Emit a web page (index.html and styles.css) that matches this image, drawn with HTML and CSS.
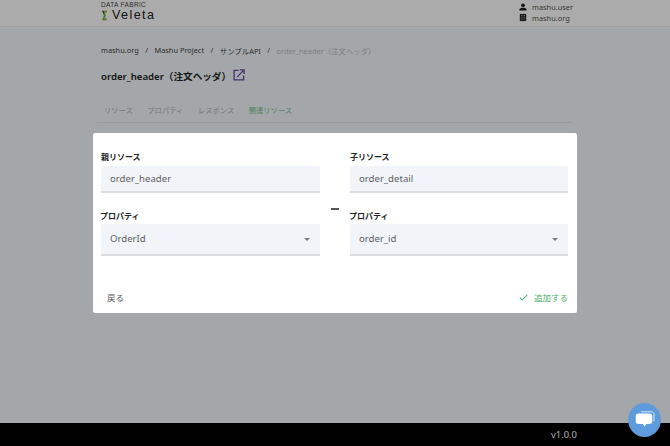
FILE: index.html
```html
<!DOCTYPE html>
<html lang="ja">
<head>
<meta charset="utf-8">
<title>Veleta</title>
<link rel="stylesheet" href="styles.css">
</head>
<body>
<div class="page">
  <header class="topbar">
    <div class="topbar-inner">
      <div class="brand">
        <span class="brand-sub">DATA FABRIC</span>
        <span class="brand-main">
          <svg class="brand-mark" width="7" height="11" viewBox="0 0 7 11"><path d="M1.2 0.8H6L5.6 2.4H3.6L5 5.2L3.4 8.6H6L5.6 10.3H1L2.8 5.4Z" fill="#73b336"/><path d="M1.2 0.8H2.4L3.2 3.4H2.2Z" fill="#3b3f2c"/></svg>
          <span class="brand-name">Veleta</span>
        </span>
      </div>
      <div class="account">
        <div class="account-row">
          <svg class="account-icon" width="8" height="8" viewBox="0 0 10 10"><circle cx="5" cy="2.8" r="2.3" fill="#1d1d1d"/><path d="M0.5 9.5V8C0.5 6.4 3.2 5.8 5 5.8S9.5 6.4 9.5 8V9.5Z" fill="#1d1d1d"/></svg>
          <span>mashu.user</span>
        </div>
        <div class="account-row">
          <svg class="account-icon" width="8" height="9" viewBox="0 0 10 10"><path d="M1 0.5H9V9.5H1Z" fill="#2b2b2b"/><path d="M2.6 2H4.2V3H2.6ZM5.8 2H7.4V3H5.8ZM2.6 4.2H4.2V5.2H2.6ZM5.8 4.2H7.4V5.2H5.8ZM2.6 6.4H4.2V7.4H2.6ZM5.8 6.4H7.4V7.4H5.8Z" fill="#8d8d8d"/></svg>
          <span>mashu.org</span>
        </div>
      </div>
    </div>
  </header>
  <main class="content">
    <nav class="crumbs">
      <span>mashu.org</span><span class="sep">/</span><span>Mashu Project</span><span class="sep">/</span><span>サンプルAPI</span><span class="sep">/</span><span class="crumb-current">order_header（注文ヘッダ）</span>
    </nav>
    <h1 class="title">
      <span>order_header（注文ヘッダ）</span>
      <svg class="title-link" width="12" height="12" viewBox="0 0 13 13" fill="none" stroke="#6b45a8" stroke-width="1.4"><path d="M6 1.5H1.2V11.8H11.5V7"/><path d="M4.5 8.5L11.5 1.5M7.5 1H12V5.5"/></svg>
    </h1>
    <div class="tabs">
      <span class="tab">リソース</span>
      <span class="tab">プロパティ</span>
      <span class="tab">レスポンス</span>
      <span class="tab tab-active">関連リソース</span>
    </div>
  </main>
  <footer class="footer"><span>v1.0.0</span></footer>
</div>
<div class="overlay">
  <section class="modal">
    <div class="fields">
      <div class="col">
        <label class="label">親リソース</label>
        <div class="input">order_header</div>
        <label class="label label-prop">プロパティ</label>
        <div class="input select">OrderId<span class="caret"></span></div>
      </div>
      <div class="link-mark"><span class="dash"></span></div>
      <div class="col">
        <label class="label">子リソース</label>
        <div class="input">order_detail</div>
        <label class="label label-prop">プロパティ</label>
        <div class="input select">order_id<span class="caret"></span></div>
      </div>
    </div>
    <div class="actions">
      <span class="back">戻る</span>
      <span class="add">
        <svg width="9" height="7" viewBox="0 0 10 8" fill="none" stroke="#4caf6a" stroke-width="1.2"><path d="M0.8 4.2L3.4 6.9L9.2 0.9"/></svg>
        <span>追加する</span>
      </span>
    </div>
  </section>
</div>
<button class="chat" type="button" aria-label="chat">
  <svg width="20" height="18" viewBox="0 0 20 18"><path d="M6 0.8H16.5C18 0.8 19 1.8 19 3.3V10.5" fill="none" stroke="#fff" stroke-width="1" opacity=".75"/><path d="M3.5 2.5H14.5C16.2 2.5 17.3 3.6 17.3 5.2V10.3C17.3 12 16.2 13 14.5 13H11.5L9.3 15.6L8 13H3.5C1.8 13 .7 12 .7 10.3V5.2C.7 3.6 1.8 2.5 3.5 2.5Z" fill="#fff"/></svg>
</button>
</body>
</html>
```
FILE: styles.css
```css
* { box-sizing: border-box; }
html, body { margin: 0; height: 100%; }
body {
  font-family: "Noto Sans", "Noto Sans CJK JP", sans-serif;
  overflow: hidden;
  background: #fff;
}
.page {
  height: 446px;
  display: flex;
  flex-direction: column;
  background: #f3f9fc;
  color: #333;
}
.topbar {
  height: 27px;
  background: #fff;
  border-bottom: 1px solid #eee;
}
.topbar-inner {
  width: 472px;
  margin-left: 101px;
  display: flex;
  justify-content: space-between;
}
.brand { display: flex; flex-direction: column; padding-top: 1px; font-family: "Liberation Sans", sans-serif; }
.brand-sub { font-size: 6.5px; line-height: 7px; color: #444; letter-spacing: .35px; }
.brand-main { display: flex; align-items: center; gap: 4px; height: 14px; margin-top: 0; }
.brand-mark { display: block; }
.brand-name { font-size: 12.6px; line-height: 14px; color: #222; letter-spacing: 1.4px; }
.account { padding-top: 1px; width: 54px; }
.account-row {
  display: flex;
  align-items: center;
  gap: 5px;
  height: 11px;
  font-size: 7.4px;
  color: #555;
  white-space: nowrap;
}
.account-icon { display: block; flex: none; }
.content { flex: 1; padding: 17px 0 0 101px; }
.crumbs { display: flex; height: 12px; align-items: center; font-size: 7.4px; color: #444; white-space: nowrap; }
.sep { margin: 0 6.5px; }
.crumb-current { color: #c0c0c0; }
.title {
  margin: 13px 0 0;
  display: flex;
  align-items: center;
  gap: 2px;
  height: 14px;
  font-size: 9.6px;
  font-weight: 600;
  color: #222;
}
.title-link { display: block; margin-top: -2px; }
.tabs {
  margin: 22px 0 0 -4px;
  width: 476px;
  height: 18px;
  display: flex;
  gap: 14.5px;
  padding-left: 7px;
  font-size: 7.3px;
  color: #b0b0b0;
  border-bottom: 1px solid #e6e6e6;
}
.tab-active { color: #7cc593; }
.footer {
  height: 23px;
  background: #000;
  color: #fff;
  display: flex;
  align-items: center;
  justify-content: flex-end;
  padding-right: 93px;
  font-size: 9.4px;
}
.overlay {
  position: absolute;
  inset: 0;
  background: rgba(0, 0, 0, .33);
  display: flex;
  align-items: center;
  justify-content: center;
}
.modal {
  width: 484px;
  height: 180px;
  background: #fff;
  border-radius: 2px;
  padding: 18px 9px 0 8px;
  color: #222;
}
.fields { display: grid; grid-template-columns: 219px 30px 218px; }
.label {
  display: block;
  height: 15px;
  font-size: 8px;
  line-height: 12px;
  font-weight: 700;
  color: #222;
  white-space: nowrap;
}
.label-prop { margin: 17px 0 0 -1px; height: 14px; line-height: 11px; }
.input {
  height: 27px;
  padding: 0 9px;
  background: #f1f4f9;
  border-bottom: 2px solid #dcdde1;
  border-radius: 2px 2px 0 0;
  font-size: 9.6px;
  line-height: 25px;
  color: #5f5f5f;
  position: relative;
}
.select { height: 32px; line-height: 30px; }
.caret {
  position: absolute;
  right: 10px;
  top: 14px;
  border-left: 3px solid transparent;
  border-right: 3px solid transparent;
  border-top: 3px solid #777;
}
.link-mark { display: flex; justify-content: center; padding-top: 57px; }
.dash { width: 8px; height: 2px; background: #555; }
.actions {
  margin-top: 34px;
  display: flex;
  justify-content: space-between;
  align-items: center;
  height: 14px;
  font-size: 8.5px;
}
.back { color: #555; padding-left: 6px; }
.add { display: flex; align-items: center; gap: 6px; color: #4caf6a; }
.chat {
  position: absolute;
  left: 628px;
  top: 403px;
  width: 33px;
  height: 34px;
  padding: 0;
  border: 0;
  border-radius: 50%;
  background: #5e9bdc;
  display: flex;
  align-items: center;
  justify-content: center;
}
```
